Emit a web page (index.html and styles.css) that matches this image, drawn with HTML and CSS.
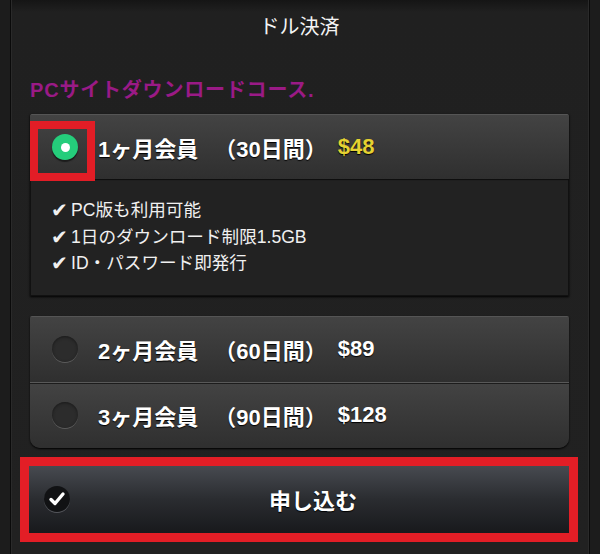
FILE: index.html
```html
<!DOCTYPE html>
<html>
<head>
	<meta charset="utf-8">
	<title>ドル決済</title>
	<link rel="stylesheet" href="styles.css">
</head>
<body>
	<div class="panel">
		<h1 class="title">ドル決済</h1>
		<h2 class="course">PCサイトダウンロードコース.</h2>

		<div class="plan-box">
			<label class="plan plan-on">
				<span class="radio radio-on"></span>
				<span class="name">1ヶ月会員</span>
				<span class="days">（30日間）</span>
				<span class="price price-on">$48</span>
				<span class="mark"></span>
			</label>
			<ul class="perks">
				<li>PC版も利用可能</li>
				<li>1日のダウンロード制限1.5GB</li>
				<li>ID・パスワード即発行</li>
			</ul>
		</div>

		<div class="plan-group">
			<label class="plan">
				<span class="radio"></span>
				<span class="name">2ヶ月会員</span>
				<span class="days">（60日間）</span>
				<span class="price">$89</span>
			</label>
			<label class="plan">
				<span class="radio"></span>
				<span class="name">3ヶ月会員</span>
				<span class="days">（90日間）</span>
				<span class="price">$128</span>
			</label>
		</div>

		<button class="submit" type="button">
			<span class="submit-icon">
				<svg width="18" height="18" viewBox="0 0 18 18"><path d="M3 9.5 L7 13.5 L15 4" fill="none" stroke="#fff" stroke-width="3.4" stroke-linecap="round" stroke-linejoin="round"/></svg>
			</span>
			申し込む
		</button>
	</div>
</body>
</html>
```

FILE: styles.css
```css
body {
	margin: 0;
	background: #1c1c1c;
	font-family: "Liberation Sans", "Noto Sans CJK JP", sans-serif;
	color: #f2f2f2;
}

.panel {
	margin: 0 10px;
	height: 554px;
	padding: 0 20px 0 19px;
	background: linear-gradient(#151515, #202020 12px, #212121);
	border-left: 1px solid #0a0a0a;
	border-right: 1px solid #0a0a0a;
	box-shadow: inset 1px 0 0 #2a2a2a, inset -1px 0 0 #2a2a2a;
	box-sizing: border-box;
}

.title {
	margin: 0;
	height: 54px;
	line-height: 54px;
	text-align: center;
	font-size: 20px;
	font-weight: normal;
	color: #f4f4f4;
}

.course {
	margin: 21px 0 9px;
	height: 30px;
	line-height: 30px;
	font-size: 20px;
	font-weight: bold;
	color: #9a1a86;
	letter-spacing: 0.8px;
}

.plan-box {
	background: #222;
	border: 1px solid #111;
	border-top: 0;
	box-shadow: 0 1px 2px #000;
}

.plan {
	display: flex;
	align-items: center;
	height: 66px;
	padding-left: 22px;
	position: relative;
	font-size: 22px;
	font-weight: bold;
	color: #fff;
	text-shadow: 0 1px 1px #000;
	background: linear-gradient(#434343, #2f2f2f);
	border-top: 1px solid #555;
	box-sizing: border-box;
}

.plan-on {
	height: 65px;
	margin: 0 -1px;
	border-radius: 2px 2px 0 0;
	box-shadow: 0 1px 1px #0d0d0d;
}

.radio {
	width: 26px;
	height: 26px;
	border-radius: 50%;
	background: #2c2c2c;
	box-shadow: inset 0 1px 3px #1a1a1a, 0 1px 0 #5c5c5c;
	margin-right: 20px;
	flex: none;
}

.radio-on {
	background: #25cd7b;
	box-shadow: 0 2px 1px #1c1c1c;
	display: flex;
	align-items: center;
	justify-content: center;
}

.radio-on::after {
	content: "";
	width: 9px;
	height: 9px;
	border-radius: 50%;
	background: #fff;
}

.days {
	margin-left: 16px;
}

.price {
	margin-left: 11px;
}

.price-on {
	color: #e5d232;
}

.mark {
	position: absolute;
	left: 0;
	top: 6px;
	width: 65px;
	height: 60px;
	border: 8px solid #e21d26;
	box-sizing: border-box;
}

.perks {
	list-style: none;
	margin: 0;
	padding: 18px 0 18px 20px;
	font-size: 17.6px;
	line-height: 26.5px;
	color: #f0f0f0;
}

.perks li {
	height: 26.5px;
	display: flex;
	align-items: center;
}

.perks li::before {
	content: "✔";
	font-family: "DejaVu Sans", sans-serif;
	font-size: 20px;
	line-height: 1;
	width: 20px;
}

.plan-group {
	margin-top: 20px;
	border-radius: 2px 2px 10px 10px;
	overflow: hidden;
	box-shadow: 0 1px 2px #000;
}

.plan-group .plan {
	height: 66px;
}

.plan-group .plan + .plan {
	height: 66px;
	border-top: 1px solid #595959;
	box-shadow: inset 0 1px 0 #1c1c1c;
}

.submit {
	display: flex;
	align-items: center;
	width: 540px;
	height: 67px;
	margin: 18px 0 0 -1px;
	padding: 0 0 0 15px;
	border: 0;
	outline: 9px solid #e31e26;
	background: linear-gradient(#474a50, #2a2c30 50%, #18191c);
	color: #fff;
	font-family: "Noto Sans CJK JP", sans-serif;
	font-size: 22px;
	font-weight: bold;
	text-shadow: 0 1px 1px #000;
	box-sizing: border-box;
}

.submit-icon {
	width: 26px;
	height: 26px;
	border-radius: 50%;
	background: #111214;
	box-shadow: 0 1px 0 #55575c;
	display: flex;
	align-items: center;
	justify-content: center;
	margin-right: 199px;
}
```
